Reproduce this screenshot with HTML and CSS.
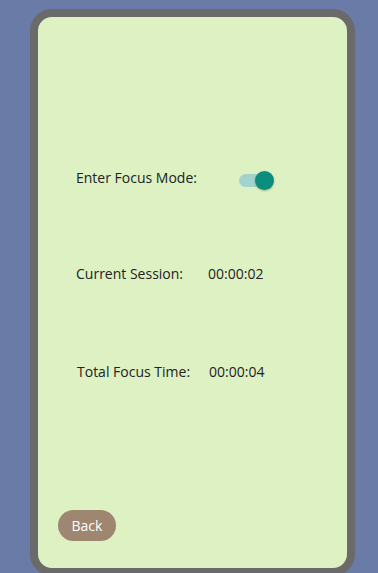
FILE: index.html
```html
<!DOCTYPE html>
<html lang="en">
<head>
    <meta charset="UTF-8">
    <meta name="viewport" content="width=device-width, initial-scale=1.0">
    <title>Focus Mode</title>
    <link rel="stylesheet" href="styles.css">
</head>
<body>

<div class="phone">
    <div class="screen">
        <div class="row row-toggle">
            <span class="label">Enter Focus Mode:</span>
            <span class="switch on"><span class="thumb"></span></span>
        </div>

        <div class="row row-session">
            <span class="label">Current Session:</span>
            <span class="value">00:00:02</span>
        </div>

        <div class="row row-total">
            <span class="label">Total Focus Time:</span>
            <span class="value">00:00:04</span>
        </div>

        <div class="spacer"></div>

        <button class="back-btn">Back</button>
    </div>
</div>

</body>
</html>
```

FILE: styles.css
```css
body {
    margin: 0;
    padding: 0;
    background-color: #6b7ba8;
    font-family: "Open Sans", "Noto Sans", sans-serif;
    overflow: hidden;
}
.phone {
    margin: 9px 0 0 30px;
    width: 309px;
    height: 551px;
    border: 8px solid #6a6a6a;
    border-radius: 22px;
    background-color: #ddf1c3;
}
.screen {
    height: 100%;
    display: flex;
    flex-direction: column;
    padding: 0 0 0 38px;
    box-sizing: border-box;
}
.row {
    display: flex;
    align-items: center;
    height: 24px;
    font-size: 14px;
    color: #222;
}
.row-toggle {
    margin-top: 148px;
}
.row-session {
    margin-top: 72px;
}
.row-total {
    margin-top: 74px;
    padding-left: 1px;
}
.row-toggle .label {
    width: 163px;
}
.row-session .label {
    width: 132px;
}
.row-total .label {
    width: 132px;
}
.switch {
    position: relative;
    display: inline-block;
    width: 30px;
    height: 13px;
    border-radius: 7px;
    background-color: #a3d3cd;
    margin-top: 6px;
}
.switch .thumb {
    position: absolute;
    top: -3px;
    left: 16px;
    width: 19px;
    height: 19px;
    border-radius: 50%;
    background-color: #0b8e7e;
    box-shadow: 0 1px 2px rgba(0, 0, 0, 0.25);
}
.spacer {
    flex: 1;
}
.back-btn {
    align-self: flex-start;
    margin: 0 0 27px -18px;
    width: 58px;
    height: 31px;
    border: none;
    border-radius: 16px;
    background-color: #9e8670;
    color: #fff;
    font-family: "Open Sans", "Noto Sans", sans-serif;
    font-size: 14px;
    padding: 0;
    cursor: pointer;
}
```
